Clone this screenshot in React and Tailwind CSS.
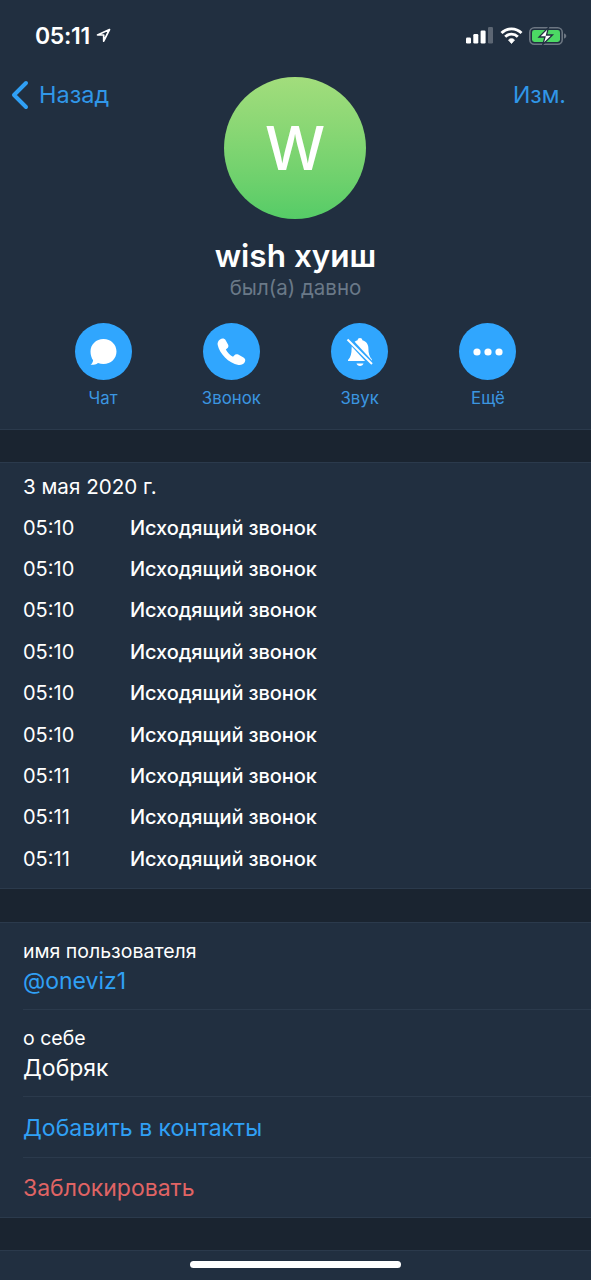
import React from 'react';

const calls = ['05:10', '05:10', '05:10', '05:10', '05:10', '05:10', '05:11', '05:11', '05:11'];

const StatusIcons = () => (
    <div className="flex items-center">
        <svg width="27" height="17" viewBox="0 0 27 17" className="mr-[7px]">
            <rect x="0" y="10.500" width="5" height="6" rx="1.200" fill="#fff" />
            <rect x="7.300" y="7" width="5" height="9.500" rx="1.200" fill="#fff" />
            <rect x="14.600" y="3.500" width="5" height="13" rx="1.200" fill="#fff" />
            <rect x="22" y="0" width="5" height="16.500" rx="1.200" fill="#5c6673" />
        </svg>
        <svg width="23" height="17" viewBox="0 0 23 17" fill="none" className="mr-[6px]">
            <path d="M1.500 6a14 14 0 0 1 20 0" stroke="#fff" strokeWidth="2.800" />
            <path d="M5.200 9.800a8.800 8.800 0 0 1 12.600 0" stroke="#fff" strokeWidth="2.800" />
            <path d="M8.500 13a4 4 0 0 1 6 0L11.500 16.500z" fill="#fff" stroke="#fff" strokeWidth="0.800" />
        </svg>
        <svg width="38" height="18" viewBox="0 0 38 18" fill="none">
            <rect x="0.800" y="0.800" width="32.400" height="16.400" rx="4.500" stroke="#6c7682" strokeWidth="1.600" />
            <rect x="3" y="3" width="28" height="12" rx="2.400" fill="#4cd964" />
            <path d="M35 6.500v5c1.500-.3 2.300-1.300 2.300-2.500S36.500 6.800 35 6.500z" fill="#6c7682" />
            <path d="M19.500 0.500 10 10h6l-2.200 7.500L23.500 8h-6z" fill="#fff" stroke="#212f40" strokeWidth="1.300" />
        </svg>
    </div>
);

const ActionButton = ({ label, children }) => (
    <div className="flex flex-col items-center w-[90px]">
        <div className="w-[57px] h-[57px] rounded-full bg-[#30a6fe] flex items-center justify-center">
            {children}
        </div>
        <span className="mt-[6px] text-[16.800px] leading-[24px] text-[#3b96e0]">{label}</span>
    </div>
);

const App = () => {
    return (
        <div className="relative w-[591px] h-[1280px] overflow-hidden bg-[#1a2430] text-white font-['Inter','Liberation_Sans',sans-serif]">
            <div className="bg-[#212f40] border-b border-[#2b3a4c]">
                <div className="flex items-center justify-between h-[71px] pl-[35px] pr-[24px]">
                    <div className="flex items-center gap-[6px]">
                        <span className="text-[23px] leading-[28px] font-semibold tracking-[-0.3px]">05:11</span>
                        <svg width="15" height="15" viewBox="0 0 15 15" fill="none">
                            <path d="M13.500 1.500 1.500 7h6.200v6.200z" stroke="#fff" strokeWidth="1.700" strokeLinejoin="round" />
                        </svg>
                    </div>
                    <StatusIcons />
                </div>

                <div className="flex items-start justify-between mt-[6px] pl-[10px] pr-[25px]">
                    <div className="flex items-center gap-[9px] w-[144px] h-[36px]">
                        <svg width="20" height="30" viewBox="0 0 20 30" fill="none">
                            <path d="M16 3 4 15l12 12" stroke="#30a0f5" strokeWidth="4" strokeLinecap="round" strokeLinejoin="round" />
                        </svg>
                        <span className="text-[23.500px] leading-[28px] text-[#3097e8]">Назад</span>
                    </div>
                    <div className="w-[142px] h-[142px] rounded-full bg-gradient-to-b from-[#a2dd7c] to-[#55cc67] flex items-center justify-center">
                        <span className="text-[60px] leading-none font-medium">W</span>
                    </div>
                    <div className="w-[130px] h-[36px] flex items-center justify-end">
                        <span className="text-[23px] leading-[28px] text-[#3097e8]">Изм.</span>
                    </div>
                </div>

                <div className="flex flex-col items-center mt-[18px]">
                    <h1 className="text-[31.500px] leading-[38px] font-semibold">wish хуиш</h1>
                    <p className="text-[20.500px] leading-[24px] mt-[1px] text-[#6a7988]">был(а) давно</p>
                </div>

                <div className="flex justify-between pl-[58px] pr-[58px] mt-[23px] pb-[19px]">
                    <ActionButton label="Чат">
                        <svg width="28" height="28" viewBox="0 0 28 28" fill="#fff">
                            <path d="M14.500 1C22 1 27.500 6.500 27.500 13.500S22 26 14.500 26c-2 0-3.800-.4-5.500-1.100C7 26.500 4 27 1.500 26.800c1.500-1 2.500-2.600 2.600-4.500C2.500 20 1.500 17 1.500 13.500 1.500 6.500 7 1 14.500 1z" />
                        </svg>
                    </ActionButton>
                    <ActionButton label="Звонок">
                        <svg width="29" height="28" viewBox="0 0 29 28" fill="#fff">
                            <path d="M3 1.500C5 0 7.500 0.300 8.500 2L11 6.500C11.800 8 11.400 9.500 10 10.500L8.800 11.400C10.500 14.500 13 17 16 18.800L17.200 17.400C18.300 16.100 19.800 15.800 21.200 16.600L26.500 19.600C28.300 20.700 28.800 22.600 27.700 24.200C26.400 26.200 24 27.300 21.500 26.900C11.500 25.300 2.500 15.500 0.700 7C0.200 4.800 1.200 2.800 3 1.500Z" />
                        </svg>
                    </ActionButton>
                    <ActionButton label="Звук">
                        <svg width="30" height="32" viewBox="0 0 30 32" fill="none">
                            <path d="M15 2c1.400 0 2.200.9 2.400 2.200 4 1 6 4.300 6 8.300 0 4.500.8 8 3.600 11v1.500H3V24c2.800-3 3.600-6.500 3.600-11.500 0-4 2-7.300 6-8.300C12.800 2.900 13.600 2 15 2z" fill="#fff" />
                            <path d="M11.500 27.500h7c-.4 1.600-1.800 2.500-3.500 2.500s-3.100-.9-3.500-2.500z" fill="#fff" />
                            <path d="M3 2.500 27 28.500" stroke="#30a6fe" strokeWidth="5.500" />
                            <path d="M2.500 3.500 27 28" stroke="#fff" strokeWidth="2" />
                        </svg>
                    </ActionButton>
                    <ActionButton label="Ещё">
                        <svg width="30" height="8" viewBox="0 0 30 8" fill="#fff">
                            <circle cx="4" cy="4" r="3.600" />
                            <circle cx="15" cy="4" r="3.600" />
                            <circle cx="26" cy="4" r="3.600" />
                        </svg>
                    </ActionButton>
                </div>
            </div>

            <div className="mt-[32px] bg-[#212f40] border-y border-[#2b3a4c] pl-[23px] pt-[10px] pb-[8px]">
                <p className="text-[20.600px] leading-[28px] mb-[6px]">3 мая 2020 г.</p>
                {calls.map((time, i) => (
                    <div key={i} className="flex items-center h-[41.400px] text-[20px]">
                        <span className="w-[107px]">{time}</span>
                        <span className="font-medium tracking-[-0.1px]">Исходящий звонок</span>
                    </div>
                ))}
            </div>

            <div className="mt-[33px] bg-[#212f40] border-y border-[#2b3a4c] pl-[23px]">
                <div className="border-b border-[#2b3a4c] h-[87px] pt-[14px]">
                    <p className="text-[19.500px] leading-[28px]">имя пользователя</p>
                    <p className="text-[23px] leading-[31px] mt-[1px] text-[#30a0f5]">@oneviz1</p>
                </div>
                <div className="border-b border-[#2b3a4c] h-[87px] pt-[14px]">
                    <p className="text-[19.500px] leading-[28px]">о себе</p>
                    <p className="text-[23px] leading-[32px]">Добряк</p>
                </div>
                <div className="border-b border-[#2b3a4c] h-[61px] pt-[4px] flex items-center">
                    <span className="text-[23px] text-[#30a0f5]">Добавить в контакты</span>
                </div>
                <div className="h-[59px] pt-[2px] flex items-center">
                    <span className="text-[23px] text-[#e06464]">Заблокировать</span>
                </div>
            </div>

            <div className="mt-[32px] bg-[#212f40] border-t border-[#2b3a4c] pl-[23px] pt-[22px]">
                <span className="text-[23px] text-[#30a0f5]">Поделиться</span>
            </div>

            <div className="absolute left-[190px] top-[1261px] w-[211px] h-[7px] rounded-full bg-white" />
        </div>
    );
};

export default App;
